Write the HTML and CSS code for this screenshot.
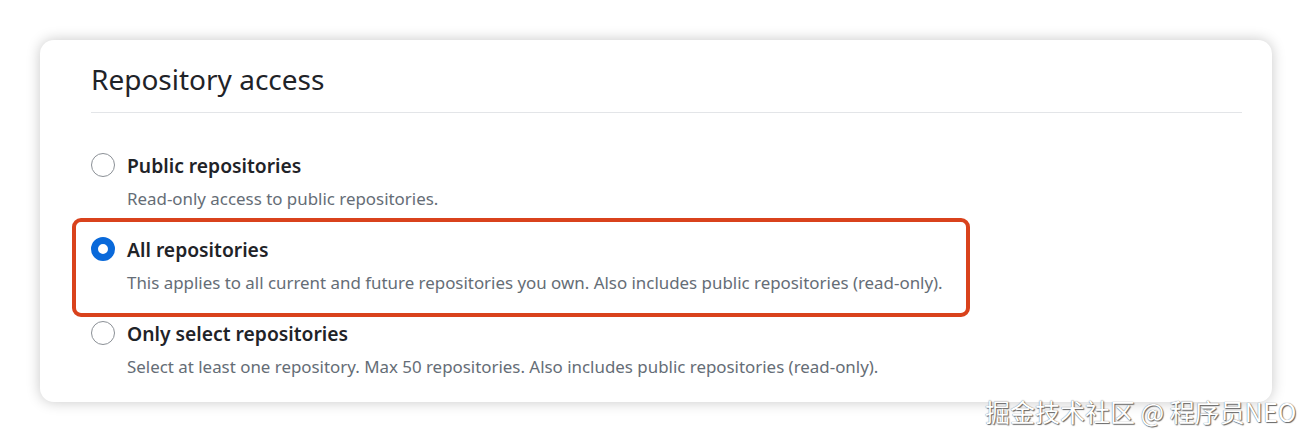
FILE: index.html
```html
<!DOCTYPE html>
<html>
<head>
<meta charset="utf-8">
<link rel="stylesheet" href="styles.css">
</head>
<body>
<div class="page">
  <div class="card">
    <h2 class="title">Repository access</h2>
    <div class="options">
      <label class="option">
        <span class="radio"></span>
        <span class="text">
          <span class="label">Public repositories</span>
          <span class="desc">Read-only access to public repositories.</span>
        </span>
      </label>
      <label class="option selected">
        <span class="radio checked"></span>
        <span class="text">
          <span class="label">All repositories</span>
          <span class="desc">This applies to all current and future repositories you own. Also includes public repositories (read-only).</span>
        </span>
      </label>
      <label class="option">
        <span class="radio"></span>
        <span class="text">
          <span class="label">Only select repositories</span>
          <span class="desc">Select at least one repository. Max 50 repositories. Also includes public repositories (read-only).</span>
        </span>
      </label>
    </div>
  </div>
  <div class="watermark">掘金技术社区 @ 程序员NEO</div>
</div>
</body>
</html>
```

FILE: styles.css
```css
html, body {
  margin: 0;
  padding: 0;
  background: #ffffff;
}
.page {
  width: 1312px;
  height: 442px;
  position: relative;
  padding: 40px 40px 0 40px;
  box-sizing: border-box;
  font-family: "Noto Sans", "Open Sans", sans-serif;
}
.card {
  width: 1232px;
  height: 362px;
  box-sizing: border-box;
  background: #fff;
  border-radius: 14px;
  box-shadow: 0 0 14px rgba(0,0,0,0.22);
  padding: 0 30px 0 51px;
}
.title {
  margin: 0;
  font-weight: 400;
  font-size: 28px;
  line-height: 36px;
  color: #1f2328;
  padding-top: 21px;
  padding-bottom: 15px;
  border-bottom: 1px solid #e3e5e8;
}
.options {
  display: flex;
  flex-direction: column;
  padding-top: 38px;
}
.option {
  display: flex;
  align-items: flex-start;
  gap: 12px;
  height: 84px;
  position: relative;
}
.option.selected::after {
  content: "";
  position: absolute;
  left: -19px;
  top: -17px;
  width: 898px;
  height: 99px;
  border: 4px solid #d9421c;
  border-radius: 9px;
  box-sizing: border-box;
}
.radio {
  width: 24px;
  height: 24px;
  border-radius: 50%;
  border: 1.5px solid #8b9096;
  box-sizing: border-box;
  margin-top: 2px;
  flex: none;
}
.radio.checked {
  border: 7px solid #0969da;
  background: #fff;
}
.text {
  display: flex;
  flex-direction: column;
}
.label {
  font-size: 19.3px;
  font-weight: 600;
  line-height: 30px;
  color: #1f2328;
}
.desc {
  font-size: 16.9px;
  line-height: 24px;
  color: #656d76;
  margin-top: 6px;
}
.watermark {
  position: absolute;
  left: 985px;
  top: 394px;
  font-family: "Noto Sans CJK SC", sans-serif;
  font-size: 25px;
  line-height: 34px;
  color: #ffffff;
  text-shadow: 0 0 1px #555, 1px 1px 1px #666;
}
```
